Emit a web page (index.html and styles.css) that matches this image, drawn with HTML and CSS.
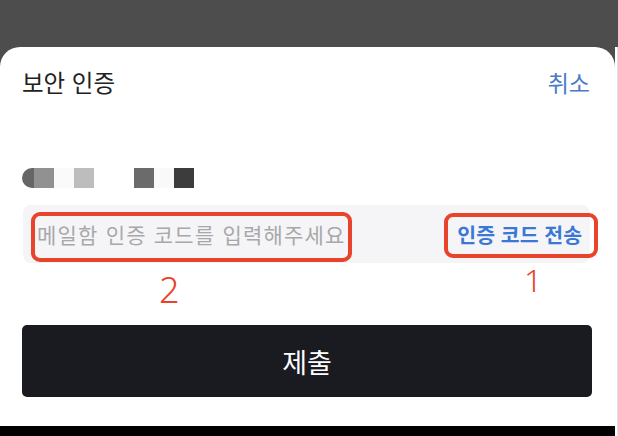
FILE: index.html
```html
<!DOCTYPE html>
<html lang="ko">

<head>
    <meta charset="UTF-8">
    <meta name="viewport" content="width=device-width, initial-scale=1.0">
    <title>보안 인증</title>

    <link rel="stylesheet" href="styles.css">
</head>

<body>
    <div class="screen">
        <div class="main">
            <div class="sheet">
                <div class="header">
                    <span class="title">보안 인증</span>
                    <span class="cancel">취소</span>
                </div>
                <div class="masked">
                    <span class="cell cell-first"></span>
                    <span class="cell c2"></span>
                    <span class="cell c3"></span>
                    <span class="cell c4"></span>
                    <span class="cell c5"></span>
                    <span class="cell c6"></span>
                    <span class="cell c7"></span>
                    <span class="cell c8"></span>
                    <span class="cell c9"></span>
                </div>
                <div class="code-field">
                    <input type="text" id="codeInput" placeholder="메일함 인증 코드를 입력해주세요">
                    <button id="sendButton">인증 코드 전송</button>
                    <div class="mark mark-input"></div>
                    <div class="mark mark-send"></div>
                    <span class="mark-num num-input">2</span>
                    <span class="mark-num num-send">1</span>
                </div>
                <button id="submitButton">제출</button>
            </div>
            <div class="bottom-bar"></div>
        </div>
        <div class="edge"></div>
    </div>
</body>

</html>
```

FILE: styles.css
```css
* {
    box-sizing: border-box;
}

body {
    margin: 0;
    font-family: "Noto Sans CJK KR", "Noto Sans", sans-serif;
}

.screen {
    display: flex;
    width: 618px;
    height: 436px;
    background-color: #4d4d4d;
}

.main {
    width: 615px;
    display: flex;
    flex-direction: column;
    padding-top: 47px;
}

.sheet {
    flex: 1;
    background-color: white;
    border-radius: 20px 20px 0 0;
    padding: 0 23px 0 22px;
}

.bottom-bar {
    height: 10px;
    background-color: #000;
}

.edge {
    width: 3px;
    margin-top: 47px;
    background-color: #fff;
    border-left: 1px solid #fff;
    border-right: 1px solid #e2e2e2;
}

.header {
    display: flex;
    justify-content: space-between;
    align-items: center;
    margin-top: 20px;
    height: 30px;
    line-height: 30px;
}

.title {
    color: #222;
    font-size: 23.5px;
}

.cancel {
    color: #4a7bc9;
    font-size: 23px;
    margin-right: 2px;
}

.masked {
    display: flex;
    margin-top: 71px;
    height: 20px;
}

.cell {
    width: 20px;
    height: 20px;
}

.cell-first {
    width: 12px;
    background-color: #666;
    border-radius: 10px 0 0 10px;
}

.c2 { background-color: #919191; }
.c3 { background-color: #fafafa; }
.c4 { background-color: #bdbdbd; }
.c5 { background-color: #fff; }
.c6 { background-color: #fff; }
.c7 { background-color: #6b6b6b; }
.c8 { background-color: #f9f9f9; }
.c9 { background-color: #3c3c3c; }

.code-field {
    position: relative;
    display: flex;
    align-items: center;
    justify-content: space-between;
    margin-top: 17px;
    margin-left: 1px;
    width: 567px;
    height: 58px;
    padding: 0 8px 0 14px;
    background-color: #f5f5f7;
    border-radius: 8px;
}

#codeInput {
    border: 0;
    background: transparent;
    font-family: inherit;
    font-size: 21px;
    letter-spacing: 1.2px;
    width: 330px;
    padding: 0;
    outline: none;
}

#codeInput::placeholder {
    color: #a8a8aa;
}

#sendButton {
    border: 0;
    background: transparent;
    padding: 0;
    font-family: inherit;
    font-size: 20.5px;
    font-weight: bold;
    color: #3b78d6;
}

.mark {
    position: absolute;
    border: 4px solid #e8432b;
    border-radius: 9px;
}

.mark-input {
    left: 8px;
    top: 7px;
    width: 321px;
    height: 50px;
}

.mark-send {
    left: 421px;
    top: 8px;
    width: 154px;
    height: 45px;
}

.mark-num {
    position: absolute;
    color: #e8432b;
    font-family: "Noto Sans", sans-serif;
    font-weight: 300;
    line-height: 1;
}

.num-input {
    left: 136px;
    top: 67px;
    font-size: 36px;
}

.num-send {
    left: 501px;
    top: 59px;
    font-size: 32px;
}

#submitButton {
    display: block;
    width: 570px;
    height: 72px;
    margin-top: 62px;
    border: 0;
    border-radius: 5px;
    background-color: #1a1b21;
    color: white;
    font-family: inherit;
    font-size: 27px;
}
```
